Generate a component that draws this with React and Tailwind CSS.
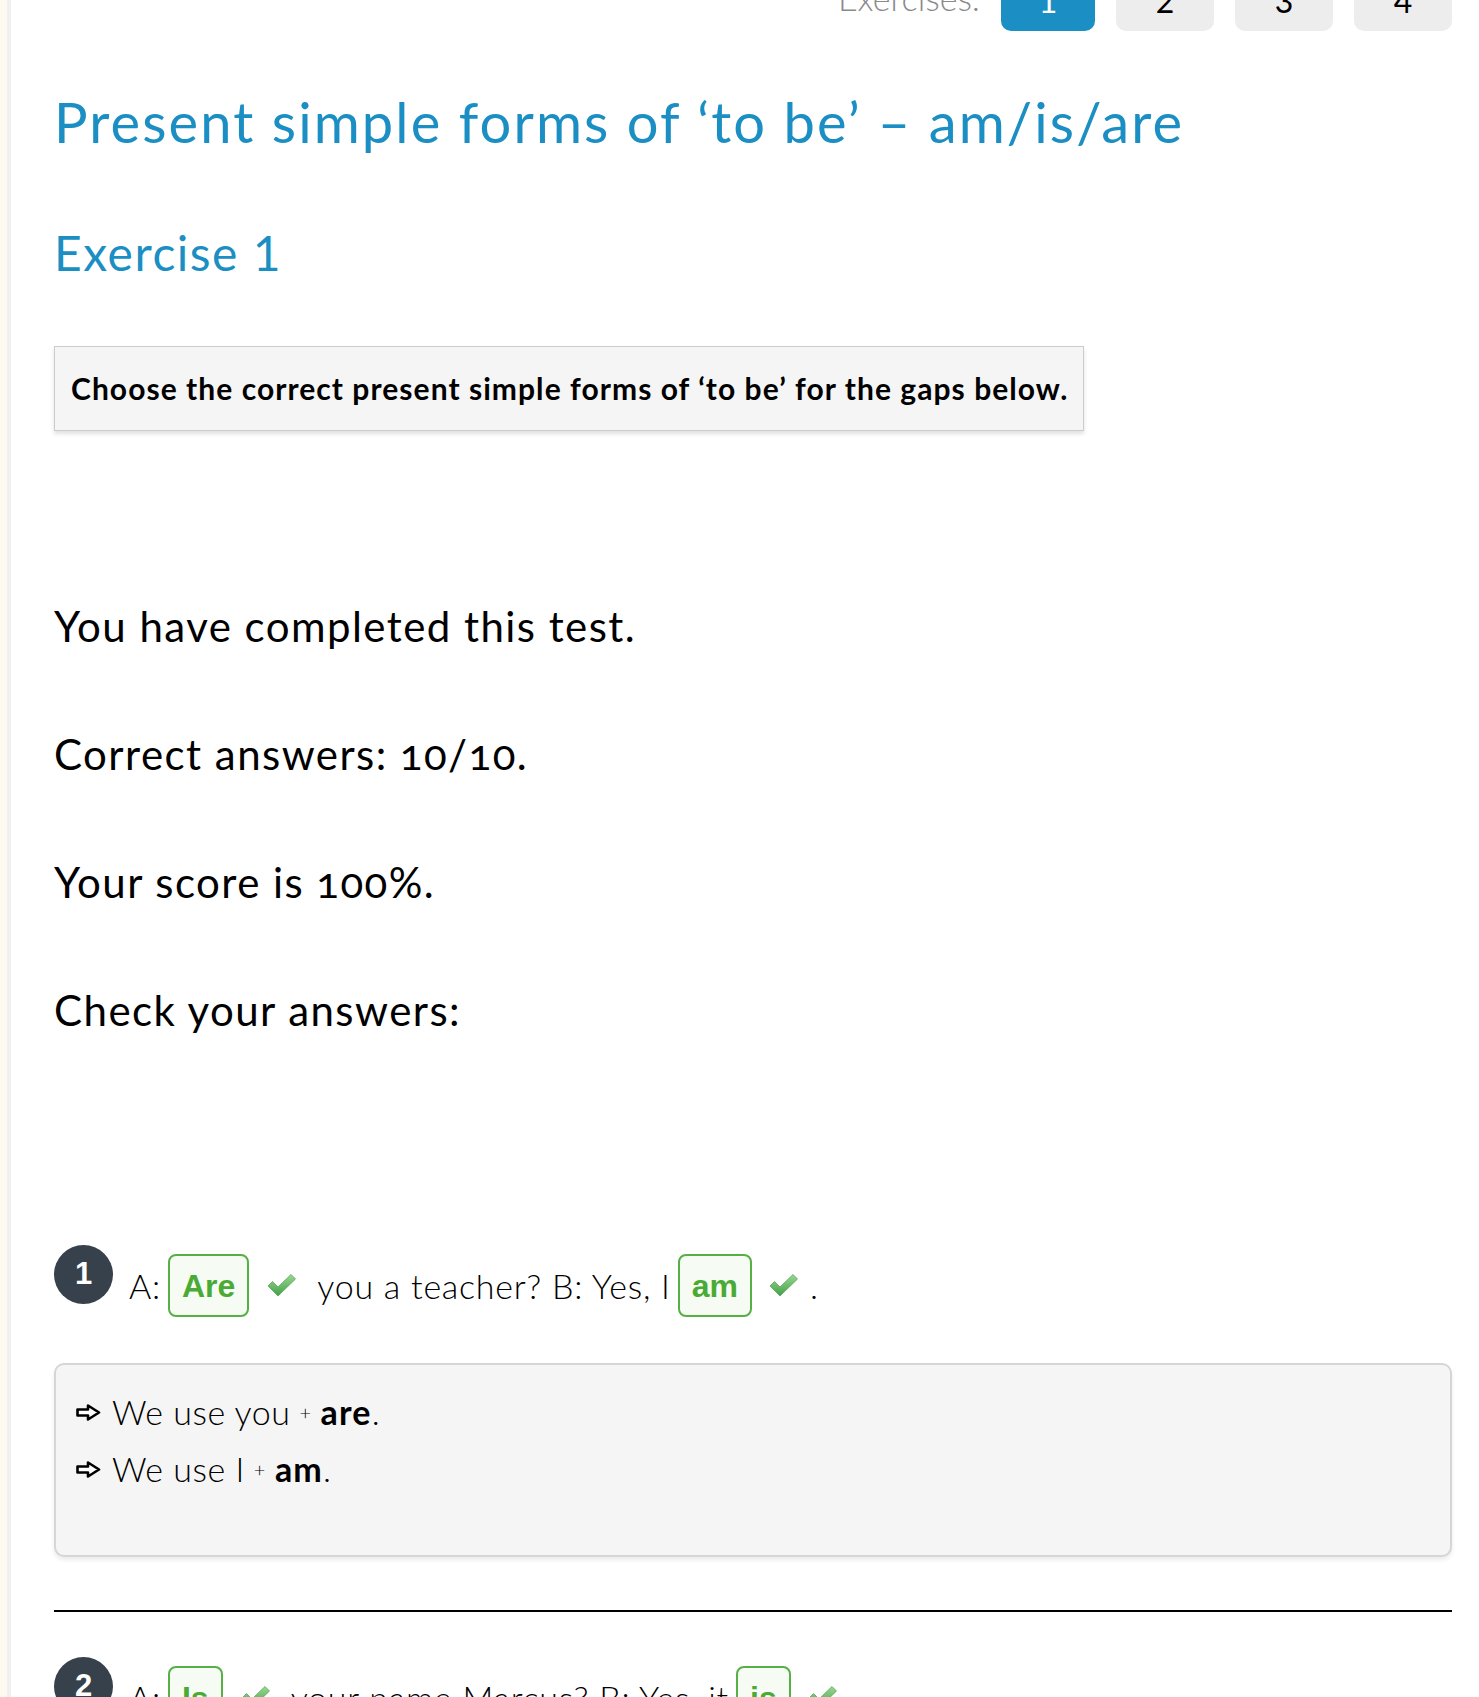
import React from "react";

function Check() {
  return (
    <svg width="32" height="26" viewBox="0 0 32 26" className="shrink-0">
      <defs>
        <linearGradient id="chk" x1="0" y1="0" x2="0" y2="1">
          <stop offset="0%" stopColor="#9ad794" />
          <stop offset="100%" stopColor="#43a047" />
        </linearGradient>
      </defs>
      <path d="M2 13 L6.5 8.5 L12 14 L25 1.5 L29.5 6 L12 23 Z" fill="url(#chk)" stroke="#55a855" strokeWidth="0.8" strokeLinejoin="round" />
    </svg>
  );
}

function Arrow() {
  return (
    <svg width="25" height="17" viewBox="0 0 25 17" className="shrink-0 mr-[11px] translate-y-[1px]">
      <path d="M1.5 5.5 H12 V1.5 L23 8.5 L12 15.5 V11.5 H1.5 Z" fill="white" stroke="black" strokeWidth="2.6" strokeLinejoin="round" />
    </svg>
  );
}

function Gap({ word }) {
  return (
    <span className="inline-flex items-center h-[63px] px-[12px] ml-[7px] rounded-[8px] border-2 border-[#56b045] bg-[#f6fbf4] text-[#4aab34] font-bold text-[32px] tracking-normal font-['Liberation_Sans',Arial,sans-serif]">
      {word}
    </span>
  );
}

function NumberBadge({ n }) {
  return (
    <div className="w-[59px] h-[59px] rounded-full bg-[#37414c] text-white flex items-center justify-center text-[31px] font-bold font-['Liberation_Sans',Arial,sans-serif] shrink-0">
      {n}
    </div>
  );
}

function Question({ n, a, mid, b }) {
  return (
    <div className="flex items-start">
      <NumberBadge n={n} />
      <div className="flex items-center text-[34px] font-light tracking-[0.75px] ml-[16px] mt-[9px]">
        <span>A:</span>
        <Gap word={a} />
        <span className="ml-[17px]"><Check /></span>
        <span className="ml-[19px]">{mid}</span>
        <Gap word={b} />
        <span className="ml-[16px]"><Check /></span>
        <span className="ml-[10px]">.</span>
      </div>
    </div>
  );
}

export default function App() {
  const pages = ["1", "2", "3", "4"];
  return (
    <div className="min-h-screen bg-white flex font-['Lato',sans-serif] text-black">
      <div className="w-[7px] bg-[#fffaf0] shrink-0" />
      <div className="w-[4px] bg-[#f0f0f0] shrink-0" />
      <main className="flex-1 pl-[43px] pr-[27px] overflow-hidden">
        <div className="flex justify-end items-end -mt-[29px] gap-[21px]">
          <span className="text-[34px] font-light text-[#8a8a8a] pb-[16px] leading-none">Exercises:</span>
          {pages.map((p) => (
            <div
              key={p}
              className={
                p === "1"
                  ? "w-[94px] h-[60px] rounded-[10px] bg-[#1b8fc3] text-white flex items-center justify-center text-[32px]"
                  : "w-[98px] h-[60px] rounded-[10px] bg-[#ededed] text-black flex items-center justify-center text-[32px]"
              }
            >
              {p}
            </div>
          ))}
        </div>

        <h1 className="mt-[57px] text-[56px] leading-[67px] text-[#1b8fc3] font-normal tracking-[2.1px]">
          Present simple forms of ‘to be’ – am/is/are
        </h1>
        <h2 className="mt-[69px] text-[48px] leading-[58px] text-[#1b8fc3] font-normal tracking-[1.5px]">
          Exercise 1
        </h2>

        <div className="mt-[64px] border border-[#cccccc] bg-[#f5f5f5] shadow-[0_3px_4px_rgba(0,0,0,0.12)] px-[16px] h-[85px] flex items-center w-[1030px]">
          <p className="text-[30px] font-bold tracking-[1.05px] whitespace-nowrap">Choose the correct present simple forms of ‘to be’ for the gaps below.</p>
        </div>

        <div className="mt-[170px] text-[42px] leading-[50px] tracking-[1.45px] oldstyle-nums flex flex-col gap-[78px]">
          <p>You have completed this test.</p>
          <p>Correct answers: 10/10.</p>
          <p>Your score is 100%.</p>
          <p>Check your answers:</p>
        </div>

        <div className="mt-[210px]">
          <Question n="1" a="Are" mid="you a teacher? B: Yes, I" b="am" />
        </div>

        <div className="mt-[46px] rounded-[10px] border-2 border-[#d6d6d6] bg-[#f5f5f5] shadow-[0_3px_4px_rgba(0,0,0,0.08)] h-[194px] px-[20px] pt-[18px] text-[34px] font-light tracking-[0.5px]">
          <p className="flex items-center h-[57px]">
            <Arrow />
            We use you <span className="text-[20px] mx-[9px]">+</span> <span className="font-bold tracking-[1.2px]">are</span>.
          </p>
          <p className="flex items-center h-[57px]">
            <Arrow />
            We use I <span className="text-[20px] mx-[9px]">+</span> <span className="font-bold tracking-[1.2px]">am</span>.
          </p>
        </div>

        <hr className="mt-[53px] border-0 h-[2px] bg-black" />

        <div className="mt-[45px]">
          <Question n="2" a="Is" mid="your name Marcus? B: Yes, it" b="is" />
        </div>
        <div className="h-[200px]" />
      </main>
    </div>
  );
}
